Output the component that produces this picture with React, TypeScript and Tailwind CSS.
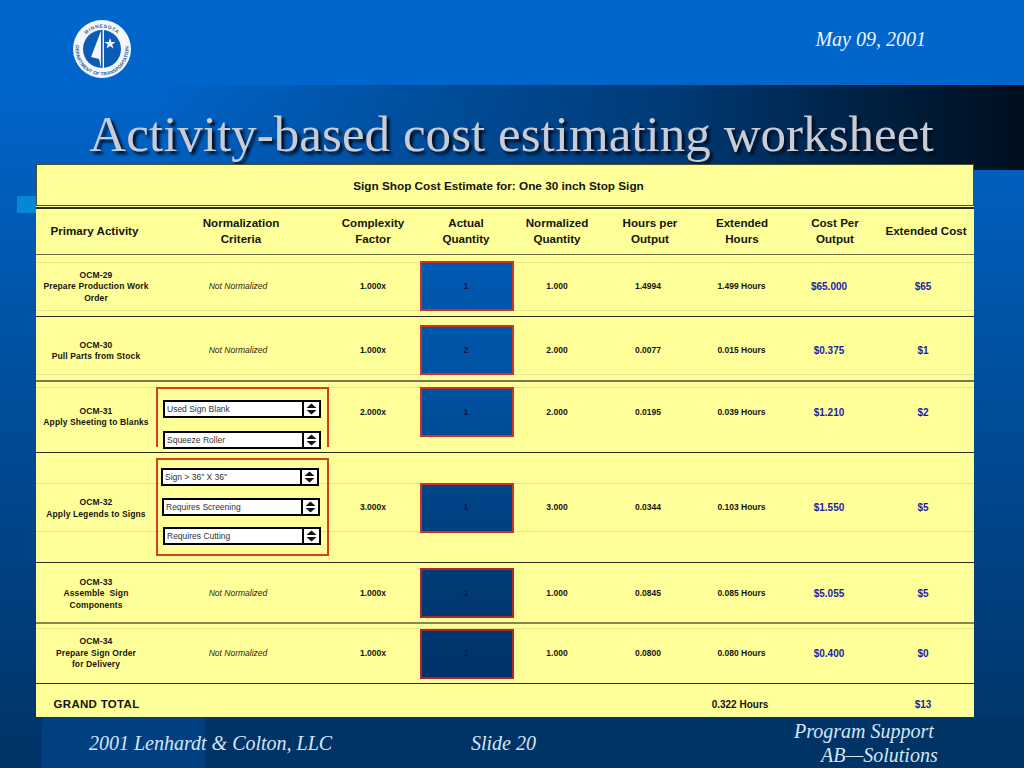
import React from "react";

const COLS = "grid grid-cols-[120px_170px_94px_94px_86px_100px_84px_90px_100px] items-center";

function Logo() {
  return (
    <svg width="60" height="60" viewBox="0 0 60 60" className="block">
      <defs>
        <path id="topArc" d="M13 17 A21.5 21.5 0 0 1 47 17" />
        <path id="botArc" d="M4.2 24 A26.5 26.5 0 1 0 55.8 24" />
      </defs>
      <circle cx="30" cy="30" r="29" fill="#f4f6fa" />
      <circle cx="30" cy="30" r="19" fill="#0a5cb4" />
      <text fontFamily="'Liberation Sans', sans-serif" fontSize="4.8" fontWeight="700" fill="#2a5f9e">
        <textPath href="#topArc" startOffset="2" textLength="34">MINNESOTA</textPath>
      </text>
      <text fontFamily="'Liberation Sans', sans-serif" fontSize="4.8" fontWeight="700" fill="#2a5f9e">
        <textPath href="#botArc" startOffset="2" textLength="90">DEPARTMENT OF TRANSPORTATION</textPath>
      </text>
      <polygon points="29,12 19,38 27,40 29,49" fill="#f4f6fa" />
      <rect x="30.6" y="11" width="1.4" height="38" fill="#f4f6fa" />
      <polygon points="38,19 39.4,23 43.6,23 40.2,25.6 41.5,29.6 38,27.1 34.5,29.6 35.8,25.6 32.4,23 36.6,23" fill="#f4f6fa" />
    </svg>
  );
}

function Dropdown({ label, offset }: { label: string; offset: string }) {
  return (
    <div className={`flex h-[18px] w-[158px] shrink-0 items-stretch border-2 border-black bg-white ${offset}`}>
      <div className="flex flex-1 items-center pl-[2px] text-left text-[8.5px] font-normal text-[#333333] whitespace-nowrap">{label}</div>
      <div className="flex w-[17px] items-center justify-center border-l-2 border-black bg-white">
        <svg width="11" height="12" viewBox="0 0 11 12">
          <polygon points="5.5,0.5 10.5,5 0.5,5" fill="#111" />
          <polygon points="5.5,11.5 10.5,7 0.5,7" fill="#111" />
        </svg>
      </div>
    </div>
  );
}

type Row = {
  id: string;
  lines: string[];
  height: string;
  border: string;
  pad: string;
  labelPad: string;
  complexity: string;
  qty: string;
  box: string;
  norm: string;
  hpo: string;
  ext: string;
  cost: string;
  total: string;
  faint: string[];
  drops?: "a" | "b";
};

const rows: Row[] = [
  {
    id: "OCM-29", lines: ["Prepare Production Work", "Order"], height: "h-[62px]", border: "border-[#6b6b40]", pad: "pt-[1px]", labelPad: "pt-[2px]",
    complexity: "1.000x", qty: "1", box: "from-[#005ab4] to-[#0055a8] border-[#c8342a]", norm: "1.000", hpo: "1.4994", ext: "1.499 Hours", cost: "$65.000", total: "$65",
    faint: ["top-[7px]", "top-[55px]"],
  },
  {
    id: "OCM-30", lines: ["Pull Parts from Stock"], height: "h-[64px]", border: "border-[#2e2e1c]", pad: "pt-[3px]", labelPad: "pt-[2px]",
    complexity: "1.000x", qty: "2", box: "from-[#0056ac] to-[#0052a2] border-[#c8342a]", norm: "2.000", hpo: "0.0077", ext: "0.015 Hours", cost: "$0.375", total: "$1",
    faint: ["top-[57px]"],
  },
  {
    id: "OCM-31", lines: ["Apply Sheeting to Blanks"], height: "h-[72px]", border: "border-[#7a7a50]", pad: "pb-[10px]", labelPad: "pt-[10px]",
    complexity: "2.000x", qty: "1", box: "from-[#0052a2] to-[#004b94] border-[#c8342a]", norm: "2.000", hpo: "0.0195", ext: "0.039 Hours", cost: "$1.210", total: "$2",
    faint: ["top-[5px]"], drops: "a",
  },
  {
    id: "OCM-32", lines: ["Apply Legends to Signs"], height: "h-[110px]", border: "border-[#2e2e1c]", pad: "pb-0", labelPad: "pt-[2px]",
    complexity: "3.000x", qty: "1", box: "from-[#004588] to-[#00407e] border-[#c8342a]", norm: "3.000", hpo: "0.0344", ext: "0.103 Hours", cost: "$1.550", total: "$5",
    faint: ["top-[30px]", "top-[78px]"], drops: "b",
  },
  {
    id: "OCM-33", lines: ["Assemble  Sign", "Components"], height: "h-[60px]", border: "border-[#2e2e1c]", pad: "pt-[1px]", labelPad: "pt-[2px]",
    complexity: "1.000x", qty: "1", box: "from-[#003c78] to-[#003871] border-[#b0242c]", norm: "1.000", hpo: "0.0845", ext: "0.085 Hours", cost: "$5.055", total: "$5",
    faint: [],
  },
  {
    id: "OCM-34", lines: ["Prepare Sign Order", "for Delivery"], height: "h-[61px]", border: "border-[#85854c]", pad: "pb-0", labelPad: "pt-0",
    complexity: "1.000x", qty: "1", box: "from-[#00376f] to-[#003369] border-[#b0242c]", norm: "1.000", hpo: "0.0800", ext: "0.080 Hours", cost: "$0.400", total: "$0",
    faint: ["top-[4px]"],
  },
];

const headers: [string, string | undefined, string][] = [
  ["Primary Activity", undefined, "pr-[3px] pb-[2px]"],
  ["Normalization", "Criteria", "pb-[2px]"],
  ["Complexity", "Factor", "pb-[2px]"],
  ["Actual", "Quantity", "pr-[2px] pb-[2px]"],
  ["Normalized", "Quantity", "pb-[2px]"],
  ["Hours per", "Output", "pb-[2px]"],
  ["Extended", "Hours", "pb-[2px]"],
  ["Cost Per", "Output", "pl-[12px] pb-[2px]"],
  ["Extended Cost", undefined, "pl-[4px] pb-[1px] whitespace-nowrap"],
];

function DataRow({ r }: { r: Row }) {
  const thick = r.border === "border-[#7a7a50]" || r.border === "border-[#85854c]";
  return (
    <div className={`relative ${COLS} ${r.height} ${r.pad} ${thick ? "border-t-2" : "border-t"} ${r.border} text-center text-[8.5px] font-bold text-[#151510]`}>
      {r.faint.map((f) => (
        <div key={f} className={`absolute inset-x-0 h-px bg-[#e9e68e] ${f}`} />
      ))}
      <div className={`relative leading-[11.4px] tracking-[0.12px] ${r.labelPad}`}>
        <div>{r.id}</div>
        {r.lines.map((l) => (
          <div key={l} className="whitespace-pre">{l}</div>
        ))}
      </div>
      {r.drops === "a" ? (
        <div className="relative mt-[5px] -mb-[8px] flex h-[60px] w-[173px] flex-col gap-[13px] self-start border-x-2 border-t-2 border-[#d2401e] pt-[11px] pl-[5px]">
          <Dropdown label="Used Sign Blank" offset="ml-0" />
          <Dropdown label="Squeeze Roller" offset="ml-0" />
        </div>
      ) : r.drops === "b" ? (
        <div className="relative mt-[5px] flex h-[98px] w-[173px] flex-col gap-[12px] self-start border-2 border-[#d2401e] pt-[8px] pl-[3px]">
          <Dropdown label={'Sign > 36" X 36"'} offset="ml-0" />
          <Dropdown label="Requires Screening" offset="ml-[1px]" />
          <Dropdown label="Requires Cutting" offset="ml-[2px] -mt-[1px]" />
        </div>
      ) : (
        <div className="relative pr-[6px] font-normal italic text-[#2a2a20]">Not Normalized</div>
      )}
      <div className="relative">{r.complexity}</div>
      <div className="relative">
        <div className={`flex h-[50px] w-[94px] items-center justify-center border-2 bg-linear-to-b pr-[2px] text-[9.5px] font-bold text-[#0b1c40] ${r.box}`}>
          {r.qty}
        </div>
      </div>
      <div className="relative">{r.norm}</div>
      <div className="relative pr-[4px]">{r.hpo}</div>
      <div className="relative pr-[1px]">{r.ext}</div>
      <div className="relative text-[10px] text-[#1c1ca8]">{r.cost}</div>
      <div className="relative pr-[2px] text-[10px] text-[#1c1ca8]">{r.total}</div>
    </div>
  );
}

export default function App() {
  return (
    <div className="relative flex h-[768px] w-[1024px] flex-col overflow-hidden bg-linear-to-b from-[#0066cc] from-10% to-[#003366] font-['Liberation_Sans',Arial,sans-serif]">
      <div className="flex h-[85px] shrink-0 items-start justify-between pl-[72px] pr-[98px]">
        <div className="mt-[19px]"><Logo /></div>
        <div className="mt-[28px] font-['Liberation_Serif',serif] text-[20px] italic leading-[22px] text-[#eef4fb]">May 09, 2001</div>
      </div>

      <div className="h-[85px] shrink-0 bg-linear-to-r from-[#0064c4]/0 from-15% via-[#003a75] via-66% to-[#000e1e] pt-[21px] pr-[1px] text-center font-['Liberation_Serif',serif] text-[51.1px] leading-[56px] whitespace-nowrap text-[#c9ccd4] [text-shadow:3px_3px_3px_#000c20]">
        Activity-based cost estimating worksheet
      </div>

      <div className="absolute left-[17px] top-[196px] h-[17px] w-[19px] bg-[#0488d4]" />

      <div className="relative z-10 mx-[36px] -mt-[6px] flex h-[553px] w-[938px] shrink-0 flex-col bg-[#ffff99]">
        <div className="flex h-[42px] shrink-0 items-center justify-center border border-[#4a5230] pt-[2px] pr-[13px] text-[11.75px] font-bold text-[#151510]">
          Sign Shop Cost Estimate for: One 30 inch Stop Sign
        </div>
        <div className={`${COLS} mt-[1px] h-[47px] shrink-0 border-t-2 border-[#2e2e1c] text-center text-[11.6px] font-bold leading-[15.5px] text-[#151510]`}>
          {headers.map(([a, b, c]) => (
            <div key={a} className={c}>
              <div>{a}</div>
              {b ? <div>{b}</div> : null}
            </div>
          ))}
        </div>
        {rows.map((r) => (
          <DataRow key={r.id} r={r} />
        ))}
        <div className={`${COLS} h-[34px] shrink-0 border-t border-[#2e2e1c] pt-[8px] text-center font-bold text-[#151510]`}>
          <div className="pl-[1px] text-[11.5px] tracking-[0.3px] whitespace-nowrap">GRAND TOTAL</div>
          <div />
          <div />
          <div />
          <div />
          <div />
          <div className="pr-[4px] text-[10px]">0.322 Hours</div>
          <div />
          <div className="pr-[2px] text-[10px] text-[#1c1ca8]">$13</div>
        </div>
      </div>

      <div className="relative flex h-[51px] shrink-0 font-['Liberation_Serif',serif] italic text-[#d6e6f5]">
        <div className="ml-[42px] h-full w-[163px] shrink-0 bg-[#004080]" />
        <div className="flex-1 bg-[#003366]" />
        <div className="absolute inset-x-0 top-0 flex h-full items-start pl-[89px] text-[20px]">
          <div className="mt-[14px] w-[382px] leading-[24px] whitespace-nowrap">2001 Lenhardt &amp; Colton, LLC</div>
          <div className="mt-[14px] w-[323px] leading-[24px] whitespace-nowrap">Slide 20</div>
          <div className="mt-[2px] leading-[24px] whitespace-nowrap">
            <div>Program Support</div>
            <div className="pl-[27px]">AB—Solutions</div>
          </div>
        </div>
      </div>
    </div>
  );
}
